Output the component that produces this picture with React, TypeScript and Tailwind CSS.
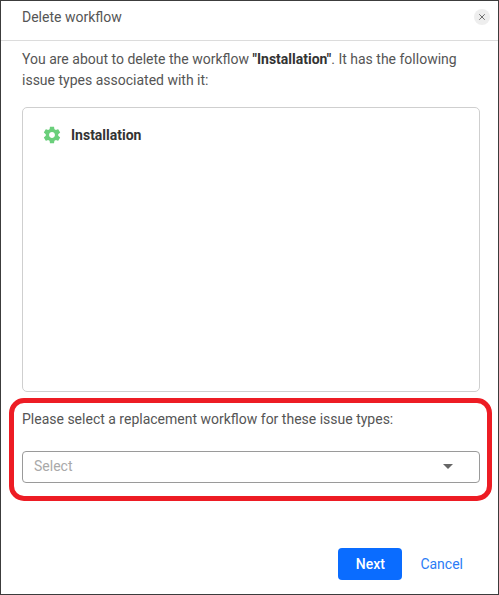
import React from 'react';
import { X } from 'lucide-react';

function Gear() {
  return (
    <svg width="20" height="20" viewBox="0 0 24 24" className="shrink-0 text-[#6acf7b]">
      <path
        fill="currentColor"
        d="M19.43 12.98c.04-.32.07-.64.07-.98s-.03-.66-.07-.98l2.11-1.65c.19-.15.24-.42.12-.64l-2-3.46c-.12-.22-.39-.3-.61-.22l-2.49 1c-.52-.4-1.08-.73-1.69-.98l-.38-2.65C14.46 2.18 14.25 2 14 2h-4c-.25 0-.46.18-.49.42l-.38 2.65c-.61.25-1.17.59-1.69.98l-2.49-1c-.23-.09-.49 0-.61.22l-2 3.46c-.13.22-.07.49.12.64l2.11 1.65c-.04.32-.07.65-.07.98s.03.66.07.98l-2.11 1.65c-.19.15-.24.42-.12.64l2 3.46c.12.22.39.3.61.22l2.49-1c.52.4 1.08.73 1.69.98l.38 2.65c.03.24.24.42.49.42h4c.25 0 .46-.18.49-.42l.38-2.65c.61-.25 1.17-.59 1.69-.98l2.49 1c.23.09.49 0 .61-.22l2-3.46c.12-.22.07-.49-.12-.64l-2.11-1.65zM12 15.5c-1.93 0-3.5-1.57-3.5-3.5s1.57-3.5 3.5-3.5 3.5 1.57 3.5 3.5-1.57 3.5-3.5 3.5z"
      />
    </svg>
  );
}

export default function App() {
  return (
    <div className="relative w-[499px] h-[595px] bg-white border border-[#3c3c3c] flex flex-col font-['Roboto','Liberation_Sans',sans-serif] text-[14px] text-[#555555] overflow-hidden">
      {/* header */}
      <div className="h-[40px] shrink-0 border-b border-[#dcdcdc] pl-[21px] pr-[8px] flex items-center justify-between">
        <span className="leading-[32px] -mt-[7px]">Delete workflow</span>
        <button className="w-[16px] h-[16px] rounded-full bg-[#eeeeee] flex items-center justify-center -mt-[7px] text-[#555555]">
          <X size={10} strokeWidth={2} />
        </button>
      </div>

      {/* body */}
      <div className="flex-1 pl-[21px] pr-[18px] flex flex-col">
        <p className="mt-[8px] leading-[21px]">
          You are about to delete the workflow <b className="font-bold text-[#333333]">"Installation"</b>. It has the following issue types associated with it:
        </p>
        <div className="mt-[16px] h-[285px] border border-[#cfcfcf] rounded-[5px] pl-[19px] pt-[17px]">
          <div className="flex items-center gap-[9px] h-[20px]">
            <Gear />
            <span className="font-bold text-[#333333]">Installation</span>
          </div>
        </div>
        <p className="mt-[17px] leading-[20px]">Please select a replacement workflow for these issue types:</p>
        <div className="mt-[22px] h-[32px] border border-[#9a9a9a] rounded-[4px] pl-[11px] pr-[26px] pb-[2px] flex items-center justify-between">
          <span className="text-[#a9a9a9]">Select</span>
          <span className="w-0 h-0 border-x-[5px] border-x-transparent border-t-[5px] border-t-[#666666]" />
        </div>
        <div className="mt-auto mb-[14px] flex items-center justify-end gap-[18px] pr-[17px]">
          <button className="w-[64px] h-[32px] rounded-[4px] bg-[#0a6cff] text-white font-medium">Next</button>
          <button className="text-[#2b7cf6]">Cancel</button>
        </div>
      </div>

      {/* red annotation */}
      <div className="absolute left-[8px] top-[397px] w-[483px] h-[103px] border-[5px] border-[#ed1c24] rounded-[15px] pointer-events-none" />
    </div>
  );
}
